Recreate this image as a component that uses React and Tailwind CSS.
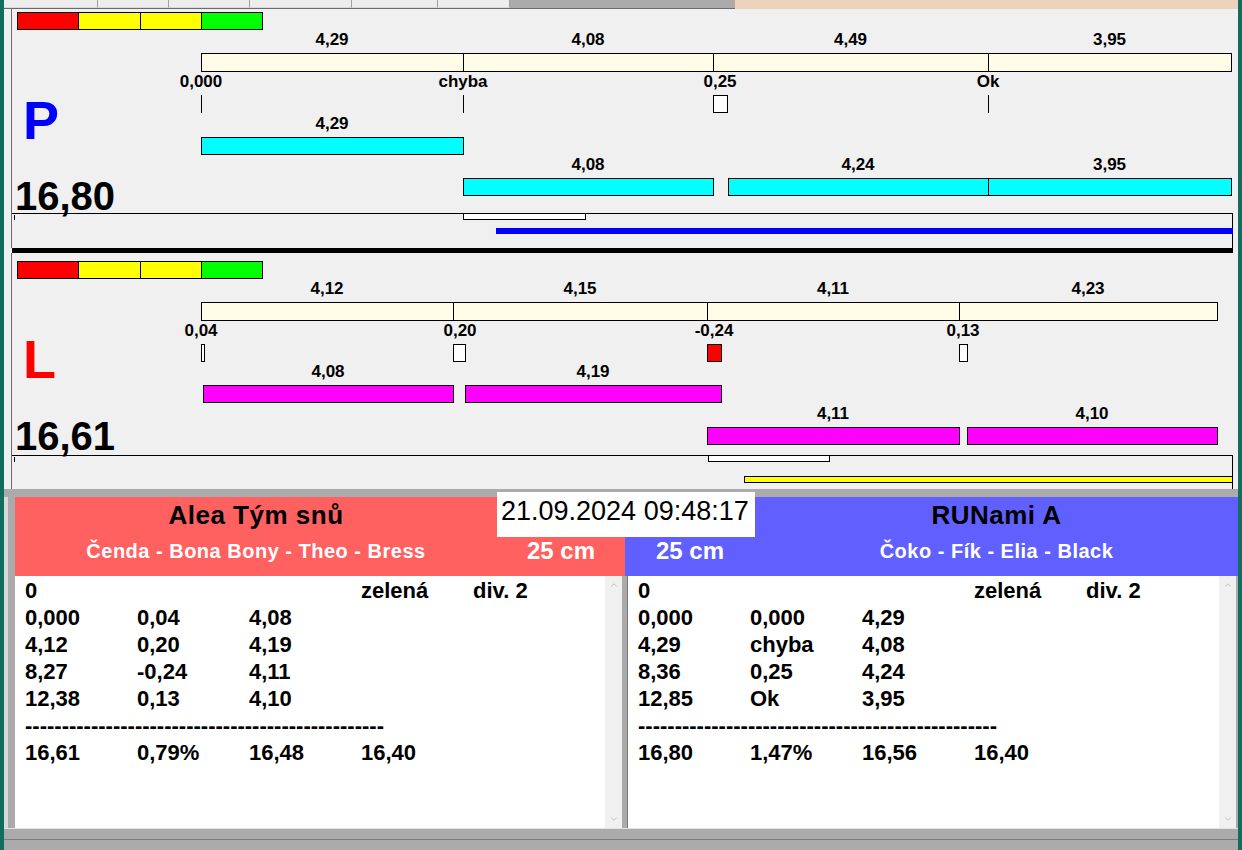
import React from "react";
import { ChevronUp, ChevronDown } from "lucide-react";

// chart coordinates are screen pixels; the canvas starts at x = 12
const OX = 12;

const panels = [
  {
    key: "P",
    oy: 9,
    hCls: "h-[239px]",
    letter: "P",
    letterCls: "text-[#0000ff]",
    letterY: 100,
    total: "16,80",
    totalBase: 210,
    legendY: 12,
    creamY: 53,
    edges: [201, 463, 713, 988, 1231],
    splits: ["4,29", "4,08", "4,49", "3,95"],
    ticks: [
      { x: 201, label: "0,000" },
      { x: 463, label: "chyba" },
      { x: 713, w: 14, label: "0,25", cx: 720 },
      { x: 988, label: "Ok" },
    ],
    barCls: "bg-[#00ffff]",
    bars: [
      { x1: 201, x2: 463, y: 137, label: "4,29" },
      { x1: 463, x2: 713, y: 178, label: "4,08" },
      { x1: 728, x2: 988, y: 178, label: "4,24" },
      { x1: 988, x2: 1231, y: 178, label: "3,95" },
    ],
    frameY: 213,
    lap: { x: 463, w: 123 },
    run: { x: 496, y: 228, cls: "h-[6px] bg-[#0000ff]" },
  },
  {
    key: "L",
    oy: 253,
    hCls: "h-[236px]",
    letter: "L",
    letterCls: "text-[#ff0000]",
    letterY: 339,
    total: "16,61",
    totalBase: 450,
    legendY: 261,
    creamY: 302,
    edges: [201, 453, 707, 959, 1217],
    splits: ["4,12", "4,15", "4,11", "4,23"],
    ticks: [
      { x: 201, w: 3, label: "0,04", cx: 201 },
      { x: 453, w: 12, label: "0,20", cx: 460 },
      { x: 707, w: 14, label: "-0,24", cx: 714, red: true },
      { x: 959, w: 8, label: "0,13", cx: 963 },
    ],
    barCls: "bg-[#ff00ff]",
    bars: [
      { x1: 203, x2: 453, y: 385, label: "4,08" },
      { x1: 465, x2: 721, y: 385, label: "4,19" },
      { x1: 707, x2: 959, y: 427, label: "4,11" },
      { x1: 967, x2: 1217, y: 427, label: "4,10" },
    ],
    frameY: 455,
    lap: { x: 708, w: 122 },
    run: { x: 744, y: 476, cls: "h-[7px] border border-black bg-[#ffff00]" },
  },
];

const leftRows = [
  ["0", "", "", "zelená", "div. 2"],
  ["0,000", "0,04", "4,08"],
  ["4,12", "0,20", "4,19"],
  ["8,27", "-0,24", "4,11"],
  ["12,38", "0,13", "4,10"],
  null,
  ["16,61", "0,79%", "16,48", "16,40"],
];

const rightRows = [
  ["0", "", "", "zelená", "div. 2"],
  ["0,000", "0,000", "4,29"],
  ["4,29", "chyba", "4,08"],
  ["8,36", "0,25", "4,24"],
  ["12,85", "Ok", "3,95"],
  null,
  ["16,80", "1,47%", "16,56", "16,40"],
];

const Label = ({ x, y, oy, children }) => (
  <div
    className="absolute -translate-x-1/2 whitespace-nowrap text-[17px] font-bold leading-[20px] text-black"
    style={{ left: x - OX, top: y - oy - 10 }}
  >
    {children}
  </div>
);

const Chart = ({ p }) => {
  const pos = (x, y) => ({ left: x - OX, top: y - p.oy });

  return (
    <div className={`relative ml-[7px] border-l border-[#6b6b6b] ${p.hCls}`}>
      {/* colour legend */}
      <div className="absolute flex h-[18px] w-[246px] border border-black" style={pos(17, p.legendY)}>
        <div className="flex-1 bg-[#ff0000]" />
        <div className="flex-1 border-l border-black bg-[#ffff00]" />
        <div className="flex-1 border-l border-black bg-[#ffff00]" />
        <div className="flex-1 border-l border-black bg-[#00ff00]" />
      </div>

      {/* split times */}
      {p.splits.map((s, i) => {
        const x1 = p.edges[i];
        const x2 = p.edges[i + 1];
        return (
          <React.Fragment key={s + i}>
            <Label x={(x1 + x2) / 2} y={p.creamY - 13} oy={p.oy}>
              {s}
            </Label>
            <div
              className="absolute h-[19px] border border-black bg-[#fffde8]"
              style={{ ...pos(x1, p.creamY), width: x2 - x1 + 1 }}
            />
          </React.Fragment>
        );
      })}

      {/* reaction ticks */}
      {p.ticks.map((t) => (
        <React.Fragment key={t.label}>
          <Label x={t.cx ?? t.x} y={p.creamY + 29} oy={p.oy}>
            {t.label}
          </Label>
          {t.w ? (
            <div
              className={`absolute h-[18px] border border-black ${t.red ? "bg-[#ff0000]" : "bg-white"}`}
              style={{ ...pos(t.x, p.creamY + 42), width: t.w + 1 }}
            />
          ) : (
            <div className="absolute h-[18px] w-px bg-black" style={pos(t.x, p.creamY + 42)} />
          )}
        </React.Fragment>
      ))}

      {/* dog bars */}
      {p.bars.map((b) => (
        <React.Fragment key={b.label + b.x1}>
          <Label x={(b.x1 + b.x2) / 2} y={b.y - 13} oy={p.oy}>
            {b.label}
          </Label>
          <div
            className={`absolute h-[18px] border border-black ${p.barCls}`}
            style={{ ...pos(b.x1, b.y), width: b.x2 - b.x1 + 1 }}
          />
        </React.Fragment>
      ))}

      <div
        className={`absolute text-[54px] font-bold leading-none ${p.letterCls}`}
        style={pos(23, p.letterY - 7)}
      >
        {p.letter}
      </div>
      <div className="absolute text-[40px] font-bold leading-none text-black" style={pos(15, p.totalBase - 34)}>
        {p.total}
      </div>

      {/* progress frame */}
      <div
        className="absolute bottom-0 w-[1221px] border-t border-r border-black"
        style={{ left: 0, top: p.frameY - p.oy }}
      />
      <div className="absolute left-[2px] h-[5px] w-px bg-black" style={{ top: p.frameY - p.oy + 2 }} />
      <div
        className="absolute h-[7px] border border-black bg-white"
        style={{ ...pos(p.lap.x, p.frameY), width: p.lap.w }}
      />
      <div className={`absolute ${p.run.cls}`} style={{ ...pos(p.run.x, p.run.y), width: 1233 - p.run.x }} />
    </div>
  );
};

const Results = ({ rows }) => (
  <div className="flex-1 bg-white pl-[10px] pt-[1px] text-[22px] font-bold leading-[27px] text-black">
    {rows.map((r, i) =>
      r ? (
        <div key={i} className="flex">
          {r.map((c, j) => (
            <div key={j} className="w-[112px] whitespace-nowrap">
              {c}
            </div>
          ))}
        </div>
      ) : (
        <div key={i} className="whitespace-nowrap">
          {"-".repeat(49)}
        </div>
      )
    )}
  </div>
);

const Scroll = () => (
  <div className="flex w-[17px] flex-col items-center justify-between bg-[#f0f0f0] py-[4px] text-[#a6a6a6]">
    <ChevronUp size={10} strokeWidth={1.5} />
    <ChevronDown size={10} strokeWidth={1.5} />
  </div>
);

const tabs = ["w-[94px]", "w-[71px]", "w-[81px]", "w-[102px]", "w-[86px]", "w-[72px]"];

export default function App() {
  return (
    <div className="relative flex h-[850px] w-[1242px] overflow-hidden bg-[#f0f0f0] font-['Liberation_Sans',Arial,sans-serif]">
      <div className="w-[4px] bg-[#106e5f]" />

      <div className="flex w-[1234px] flex-col">
        {/* tab strip */}
        <div className="flex h-[9px]">
          <div className="flex w-[731px] border-b border-[#6b6b6b]">
            {tabs.map((w, i) => (
              <div key={i} className={`${w} border-r border-b border-r-[#a0a0a0] border-b-[#d8d8d8] bg-[#ededed]`} />
            ))}
            <div className="flex-1 bg-[#ababab]" />
          </div>
          <div className="flex-1 bg-[#eed3bc]" />
        </div>

        <Chart p={panels[0]} />
        <div className="ml-[8px] h-[5px] w-[1221px] bg-black" />
        <Chart p={panels[1]} />

        <div className="h-[8px] bg-[#ababab]" />

        <div className="flex h-[331px]">
          <div className="flex w-[11px]">
            <div className="w-[4px] bg-[#d9d9d9]" />
            <div className="flex-1 bg-[#ababab]" />
          </div>

          <div className="flex w-[1223px] flex-col">
            <div className="flex h-[79px]">
              <div className="flex w-[610px] flex-col bg-[#ff6060]">
                <div className="h-[36px] w-[482px] text-center text-[26px] font-bold leading-[36px] tracking-[0.5px] text-black">
                  Alea Tým snů
                </div>
                <div className="flex h-[36px] leading-[36px] text-white">
                  <div className="w-[482px] text-center text-[20px] font-bold tracking-[0.5px]">
                    Čenda - Bona Bony - Theo - Bress
                  </div>
                  <div className="flex-1 text-center text-[24px] font-bold">25 cm</div>
                </div>
              </div>
              <div className="flex flex-1 flex-col bg-[#6060ff]">
                <div className="flex h-[36px]">
                  <div className="w-[130px]" />
                  <div className="flex-1 text-center text-[26px] font-bold leading-[36px] tracking-[0.5px] text-black">
                    RUNami A
                  </div>
                </div>
                <div className="flex h-[36px] leading-[36px] text-white">
                  <div className="w-[130px] text-center text-[24px] font-bold">25 cm</div>
                  <div className="flex-1 text-center text-[20px] font-bold tracking-[0.5px]">
                    Čoko - Fík - Elia - Black
                  </div>
                </div>
              </div>
            </div>

            <div className="flex flex-1">
              <div className="flex w-[607px]">
                <Results rows={leftRows} />
                <Scroll />
              </div>
              <div className="w-[6px] border-r border-[#7a7a7a] bg-[#ababab]" />
              <div className="flex w-[608px]">
                <Results rows={rightRows} />
                <Scroll />
              </div>
              <div className="flex-1 bg-[#ababab]" />
            </div>
          </div>
        </div>

        {/* status strip */}
        <div className="flex h-[22px] flex-col bg-[#ababab]">
          <div className="h-px bg-[#e2e2e2]" />
          <div className="h-[10px]" />
          <div className="h-px bg-[#7d7d7d]" />
        </div>
      </div>

      <div className="w-[4px] bg-[#106e5f]" />

      {/* time stamp sits over both team headers */}
      <div className="absolute left-[497px] top-[492px] h-[45px] w-[258px] bg-white pl-[4px] pt-[2px] text-[27px] leading-[34px] text-black">
        21.09.2024 09:48:17
      </div>
    </div>
  );
}
